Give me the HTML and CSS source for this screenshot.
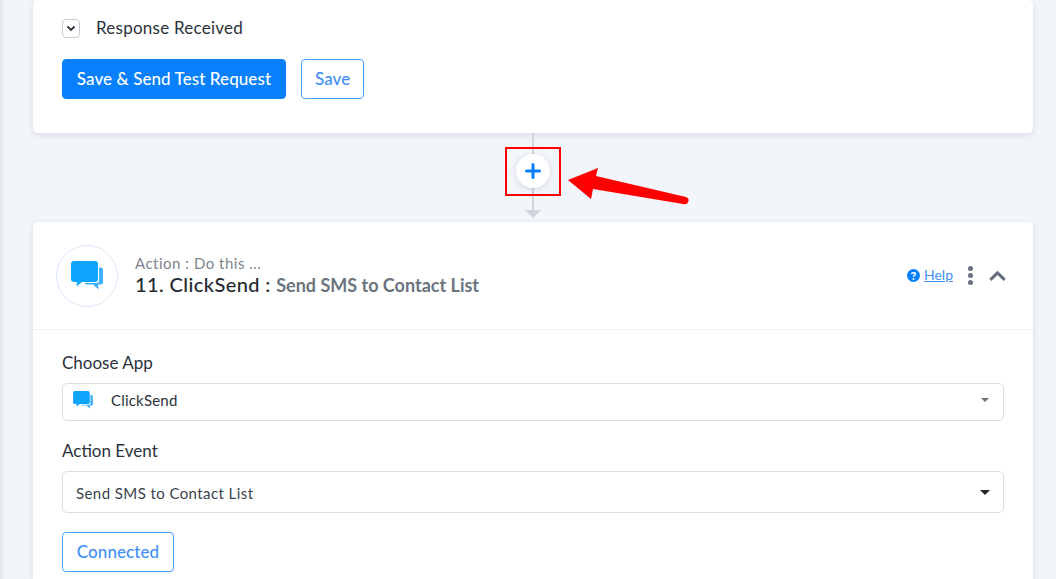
FILE: index.html
```html
<!DOCTYPE html>
<html lang="en">
<head>
<meta charset="utf-8">
<title>ClickSend action</title>
<link rel="stylesheet" href="styles.css">
</head>
<body>
<main class="flow">
  <section class="card top-card">
    <div class="response">
      <span class="check"><svg width="10" height="7" viewBox="0 0 10 7"><path d="M1.500 1.500 5 5l3.500-3.500" fill="none" stroke="#2f3640" stroke-width="1.900"/></svg></span>
      <span>Response Received</span>
    </div>
    <div class="actions">
      <button class="btn primary">Save &amp; Send Test Request</button>
      <button class="btn outline save">Save</button>
    </div>
  </section>

  <div class="connector">
    <span class="line"></span>
    <span class="plus"><svg width="16" height="16" viewBox="0 0 16 16"><path d="M8 1.500v13M1.500 8h13" stroke="#087ffb" stroke-width="3" stroke-linecap="round"/></svg></span>
    <span class="line lower"></span>
    <span class="tip"></span>
    <span class="mark"></span>
    <svg class="arrow" width="124" height="50" viewBox="0 0 124 50"><path d="M0 24 30 12 28 20 118 41Q122 43 120 46 119 49 115 48L25 33 23 43Z" fill="#f00"/></svg>
  </div>

  <section class="card last-card">
    <header class="head">
      <span class="logo"><svg width="32" height="29" viewBox="0 0 32 29"><use href="#chat"/></svg></span>
      <div class="titles">
        <div class="kicker">Action : Do this ...</div>
        <div class="title">11. ClickSend : <span class="sub">Send SMS to Contact List</span></div>
      </div>
      <div class="tools">
        <svg class="q" width="13" height="13" viewBox="0 0 13 13"><circle cx="6.500" cy="6.500" r="6.500" fill="#087ffb"/><path d="M4.500 5C4.600 3.200 8.500 3.200 8.500 5 8.500 6.300 6.500 6.200 6.500 7.800" fill="none" stroke="#fff" stroke-width="1.500"/><circle cx="6.500" cy="10" r="1" fill="#fff"/></svg>
        <a class="help" href="#">Help</a>
        <span class="dots"><i></i><i></i><i></i></span>
        <svg width="17" height="10" viewBox="0 0 17 10"><path d="M1.300 8.800 8.500 1.800l7.200 7" fill="none" stroke="#66707c" stroke-width="3"/></svg>
      </div>
    </header>
    <div class="body">
      <label class="label">Choose App</label>
      <div class="select app">
        <svg width="20" height="18" viewBox="0 0 32 29"><use href="#chat"/></svg>
        <span>ClickSend</span>
        <i class="caret small"></i>
      </div>
      <label class="label">Action Event</label>
      <div class="select event">
        <span>Send SMS to Contact List</span>
        <i class="caret"></i>
      </div>
      <button class="btn outline connected">Connected</button>
    </div>
  </section>
</main>
<svg class="defs" width="0" height="0">
  <symbol id="chat" viewBox="0 0 32 29">
    <path d="M28 6.500h1.500A2.500 2.500 0 0 1 32 9v12a2.500 2.500 0 0 1-2.500 2.500H27l.5 5-5.500-5h-7l-1.500-1.500H26a2 2 0 0 0 2-2Z" fill="#3fb0fc"/>
    <path d="M3 0h21a3 3 0 0 1 3 3v15a3 3 0 0 1-3 3H11l-5.500 4.500L6 21H3a3 3 0 0 1-3-3V3a3 3 0 0 1 3-3Z" fill="#10a5fd"/>
  </symbol>
</svg>
</body>
</html>
```
FILE: styles.css
```css
* { box-sizing: border-box; }
html, body { height: 100%; }
body {
  margin: 0;
  overflow: hidden;
  background: #f2f5f9;
  border-left: 3px solid #e6eaee;
  font-family: Lato, "Open Sans", sans-serif;
  color: #2b323a;
}
.flow {
  height: 100vh;
  display: flex;
  flex-direction: column;
  padding: 0 23px 0 30px;
}
.card {
  background: #fff;
  border-radius: 5px;
  box-shadow: 0 2px 6px rgba(60, 70, 90, .14);
}
.top-card { height: 133px; flex: none; padding: 17px 29px 0; }
.last-card { flex: 1; min-height: 0; border-radius: 5px 5px 0 0; }
.response { display: flex; align-items: center; gap: 16px; font-size: 17px; letter-spacing: .24px; height: 20px; }
.check {
  width: 18px; height: 19px;
  display: flex; align-items: center; justify-content: center;
  border: 1px solid #c5ccd4; border-radius: 4px;
  margin-top: 3px;
}
.actions { display: flex; gap: 15px; margin-top: 22px; }
.btn {
  height: 40px;
  padding: 0 0 2px;
  border-radius: 4px;
  font: 500 17px Lato, "Open Sans", sans-serif;
  letter-spacing: .08px;
  white-space: nowrap;
}
.primary { width: 224px; background: #087ffb; border: 1px solid #087ffb; color: #fff; }
.outline { background: #fff; border: 1px solid #4a9ffa; color: #3f8ff5; }
.save { padding: 0 13px 2px; }
.connector {
  position: relative;
  height: 89px;
  flex: none;
  display: flex;
  flex-direction: column;
  align-items: center;
}
.line { width: 2px; height: 22px; flex: none; background: #d0d6de; }
.line.lower { height: 23px; }
.plus {
  width: 34px; height: 34px;
  flex: none;
  display: flex; align-items: center; justify-content: center;
  background: #fff; border-radius: 50%;
  box-shadow: 0 1px 5px rgba(60, 70, 90, .18);
  margin: -1px 0;
  z-index: 1;
}
.tip {
  width: 0; height: 0;
  flex: none;
  border: 8px solid transparent;
  border-top: 8px solid #d0d6de;
  border-bottom: 0;
}
.mark {
  position: absolute;
  left: 472px; top: 14px;
  width: 56px; height: 49px;
  border: 2px solid #f00;
  z-index: 2;
}
.arrow { position: absolute; left: 535px; top: 23px; }
.head {
  height: 108px;
  display: flex;
  align-items: center;
  padding: 0 27px 0 23px;
  border-bottom: 1px solid #eef3fa;
}
.logo {
  width: 62px; height: 62px;
  flex: none;
  display: flex; align-items: center; justify-content: center;
  border: 1px solid #dbe9fb; border-radius: 50%;
}
.titles { margin-left: 17px; flex: 1; }
.kicker { font-size: 15px; letter-spacing: .5px; line-height: 17px; color: #7b848e; }
.title { font-size: 20px; font-weight: 500; letter-spacing: .4px; line-height: 24px; color: #23292f; }
.sub { font-size: 18px; font-weight: 700; letter-spacing: 0; color: #6b747e; }
.tools { display: flex; align-items: center; }
.help { margin: 0 0 2px 4px; font-size: 14px; color: #3f8ff5; }
.q { margin-bottom: 1px; }
.dots { display: flex; flex-direction: column; gap: 2px; margin: 0 16px 0 15px; }
.dots i { width: 5px; height: 5px; border-radius: 50%; background: #66707c; }
.body { padding: 22px 29px 0; }
.label { display: block; font-size: 17px; line-height: 22px; }
.select {
  display: flex; align-items: center;
  margin: 9px 0 19px;
  border: 1px solid #d8dee5;
  border-radius: 5px;
  font-size: 15px;
  letter-spacing: .2px;
}
.select span { flex: 1; }
.app { height: 38px; padding: 0 14px 5px 10px; gap: 18px; }
.event { height: 42px; padding: 1px 13px 0; margin-bottom: 19px; color: #3a424b; letter-spacing: .42px; }
.caret {
  width: 0; height: 0;
  border: 5px solid transparent;
  border-top: 5px solid #222;
  border-bottom: 0;
}
.caret.small { border-width: 4px 4px 0; border-top-color: #6b747e; }
.connected { display: block; width: 112px; }
.defs { position: absolute; }
```
